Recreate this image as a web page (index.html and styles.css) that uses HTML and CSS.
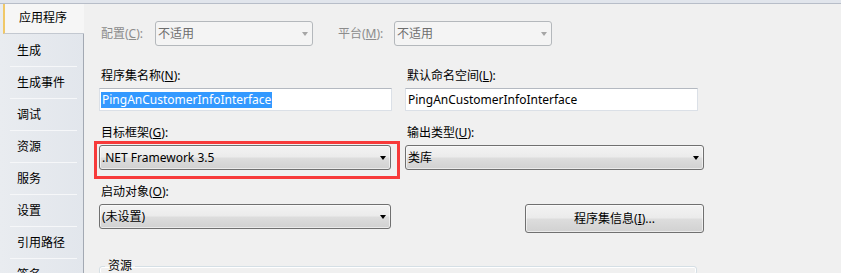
FILE: index.html
```html
<!DOCTYPE html>
<html lang="zh-CN">
<head>
<meta charset="utf-8">
<title>应用程序</title>
<link rel="stylesheet" href="styles.css">
</head>
<body>
<div class="window">
  <div class="topstrip"></div>
  <div class="main">
    <nav class="sidebar">
      <div class="tab active">应用程序</div>
      <div class="tab">生成</div>
      <div class="tab">生成事件</div>
      <div class="tab">调试</div>
      <div class="tab">资源</div>
      <div class="tab">服务</div>
      <div class="tab">设置</div>
      <div class="tab">引用路径</div>
      <div class="tab">签名</div>
    </nav>
    <section class="content">
      <div class="config-row">
        <span class="label disabled cfg-label">配置(<u>C</u>):</span>
        <div class="combo combo-disabled cfg-combo"><span class="combo-text">不适用</span><span class="arrow"></span></div>
        <span class="label disabled plat-label">平台(<u>M</u>):</span>
        <div class="combo combo-disabled cfg-combo"><span class="combo-text">不适用</span><span class="arrow"></span></div>
      </div>
      <div class="separator"></div>
      <div class="form-grid">
        <div class="field">
          <span class="label">程序集名称(<u>N</u>):</span>
          <div class="textbox"><span class="selected">PingAnCustomerInfoInterface</span></div>
        </div>
        <div class="field">
          <span class="label">默认命名空间(<u>L</u>):</span>
          <div class="textbox"><span>PingAnCustomerInfoInterface</span></div>
        </div>
        <div class="field annotated">
          <span class="label">目标框架(<u>G</u>):</span>
          <div class="combo combo-enabled"><span class="combo-text">.NET Framework 3.5</span><span class="arrow"></span></div>
          <div class="highlight-box"></div>
        </div>
        <div class="field">
          <span class="label">输出类型(<u>U</u>):</span>
          <div class="combo combo-enabled wide"><span class="combo-text">类库</span><span class="arrow"></span></div>
        </div>
        <div class="field">
          <span class="label">启动对象(<u>O</u>):</span>
          <div class="combo combo-enabled"><span class="combo-text">(未设置)</span><span class="arrow"></span></div>
        </div>
        <div class="field button-cell">
          <button class="btn">程序集信息(<u>I</u>)...</button>
        </div>
      </div>
      <fieldset class="group">
        <legend>资源</legend>
      </fieldset>
    </section>
  </div>
</div>
</body>
</html>
```

FILE: styles.css
```css
* { box-sizing: border-box; }

html, body {
  margin: 0;
  padding: 0;
  width: 841px;
  height: 273px;
  overflow: hidden;
  background: #f0f0f0;
}

body {
  font-family: "Noto Sans", "Noto Sans CJK SC", sans-serif;
  font-size: 12px;
  color: #000;
}

u { text-decoration: underline; text-underline-offset: 1px; }

.window {
  display: flex;
  flex-direction: column;
  height: 273px;
}

.topstrip {
  height: 4px;
  flex: none;
  background: #e1e5ec;
  border-bottom: 1px solid #b7bdc8;
}

.main {
  display: flex;
  flex: 1;
  min-height: 0;
}

/* Sidebar */
.sidebar {
  width: 84px;
  flex: none;
  display: flex;
  flex-direction: column;
  background: linear-gradient(90deg, #e9ecf0 0%, #e2e6ec 100%);
}

.tab {
  height: 32px;
  flex: none;
  display: flex;
  align-items: center;
  padding-left: 17px;
  padding-top: 1px;
  line-height: 16px;
  border-right: 1px solid #a3a9b3;
  position: relative;
}

.tab + .tab:not(:nth-child(2))::before {
  content: "";
  position: absolute;
  left: 10px;
  right: 6px;
  top: 0;
  border-top: 1px solid #f6f7f9;
}

.tab.active {
  height: 30px;
  padding-left: 14px;
  padding-top: 0;
  padding-bottom: 1px;
  margin-left: 3px;
  background: #f6f6f6;
  border-left: 2px solid #f0c868;
  border-right: none;
  border-bottom: 1px solid #c3c8d0;
}

/* Content */
.content {
  flex: 1;
  padding-left: 15px;
  display: flex;
  flex-direction: column;
}

.label {
  display: block;
  height: 16px;
  line-height: 16px;
  padding-left: 2px;
  padding-top: 1px;
  white-space: nowrap;
}

.label.disabled { color: #8c8c8c; }

.config-row {
  margin-top: 17px;
  display: flex;
  align-items: center;
  height: 24px;
}

.label.cfg-label { width: 56px; }
.label.plat-label { width: 58px; margin-left: 23px; }
.combo.cfg-combo { width: 158px; }

.separator {
  margin-top: 16px;
  height: 1px;
  background: #a0a0a0;
}

.form-grid {
  margin-top: 6px;
  display: grid;
  grid-template-columns: 293px 299px;
  column-gap: 13px;
  row-gap: 13px;
}

.field {
  display: flex;
  flex-direction: column;
  gap: 5px;
}

.annotated { position: relative; }

.highlight-box {
  position: absolute;
  left: -5px;
  top: 17px;
  width: 306px;
  height: 38px;
  border: 3px solid #f73a3a;
}

.textbox {
  width: 293px;
  height: 23px;
  background: #fff;
  border: 1px solid #dbe0e7;
  border-top-color: #b4b9c1;
  padding: 3px 1px 2px;
  line-height: 16px;
  white-space: nowrap;
  overflow: hidden;
}

.textbox span { padding: 0 1px; display: inline-block; }

.selected {
  background: #3399ff;
  color: #fff;
}

.combo {
  width: 292px;
  height: 25px;
  border-radius: 3px;
  position: relative;
  display: flex;
  align-items: center;
  padding-left: 2px;
  padding-top: 1px;
  white-space: nowrap;
}

.combo.wide { width: 299px; }

.combo-enabled {
  border: 1px solid #707070;
  background: linear-gradient(#f3f3f3 0%, #ebebeb 48%, #dddddd 52%, #d1d1d1 100%);
  box-shadow: inset 0 0 0 1px rgba(255,255,255,0.55);
}

.combo-disabled {
  border: 1px solid #b4b8bc;
  background: #f4f4f4;
  color: #6d6d6d;
}

.combo-text { line-height: 16px; }

.arrow {
  position: absolute;
  right: 4px;
  top: 10px;
  width: 0;
  height: 0;
  border-left: 3.5px solid transparent;
  border-right: 3.5px solid transparent;
  border-top: 4px solid #000;
}

.combo-disabled .arrow { border-top-color: #a6a6a6; }

.button-cell {
  align-items: flex-end;
  padding-top: 21px;
}

.btn {
  width: 179px;
  height: 29px;
  border: 1px solid #707070;
  border-radius: 3px;
  background: linear-gradient(#f3f3f3 0%, #ebebeb 48%, #dddddd 52%, #d1d1d1 100%);
  box-shadow: inset 0 0 0 1px rgba(255,255,255,0.55);
  font-family: inherit;
  font-size: 12px;
  color: #000;
  padding: 1px 0 0;
  line-height: 16px;
}

.group {
  margin: 25px 0 0 0;
  width: 598px;
  height: 60px;
  padding: 0 0 0 5px;
  border: 1px solid #d5dfe5;
  border-radius: 3px;
  box-shadow: inset 0 0 0 1px #fff;
  min-width: 0;
}

.group legend {
  padding: 0 3px;
  line-height: 16px;
  font-size: 12px;
}
```
